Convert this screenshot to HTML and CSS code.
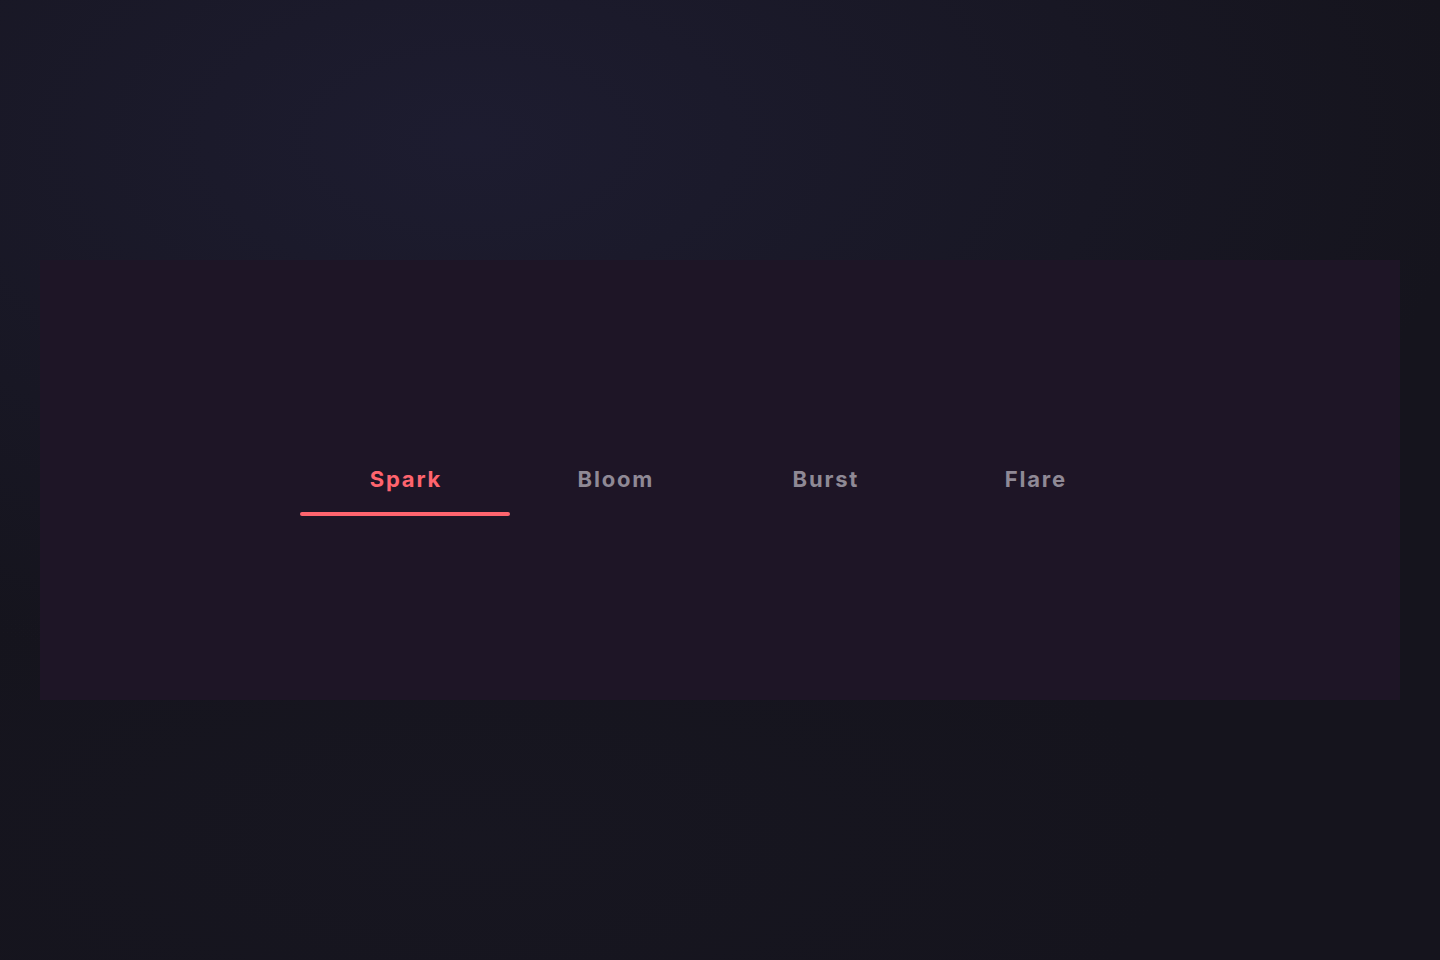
FILE: index.html
```html
<!DOCTYPE html>
<html lang="en">
<head>
<meta charset="utf-8">
<title>Tabs</title>
<link rel="stylesheet" href="styles.css">
</head>
<body>
<main class="stage">
  <section class="panel">
    <nav class="tabs" role="tablist">
      <button class="tab active" role="tab">Spark</button>
      <button class="tab" role="tab">Bloom</button>
      <button class="tab" role="tab">Burst</button>
      <button class="tab" role="tab">Flare</button>
    </nav>
  </section>
</main>
</body>
</html>
```
FILE: styles.css
```css
html, body {
  margin: 0;
  padding: 0;
  height: 100%;
}
body {
  background-color: #15141d;
  background-image:
    radial-gradient(ellipse 1000px 560px at 470px 140px, rgba(30, 29, 50, 0.9), rgba(30, 29, 50, 0) 100%),
    radial-gradient(ellipse 700px 300px at 480px 840px, rgba(25, 24, 36, 0.5), rgba(25, 24, 36, 0) 100%);
  font-family: Inter, "Liberation Sans", sans-serif;
}
.stage {
  box-sizing: border-box;
  height: 960px;
  padding: 260px 40px;
}
.panel {
  height: 440px;
  background: #1e1526;
  display: flex;
  align-items: center;
  padding-left: 260px;
}
.tabs {
  display: flex;
  margin-top: 20px;
}
.tab {
  display: block;
  width: 210px;
  background: none;
  border: 0;
  padding: 0 0 22px;
  font-family: Inter, "Liberation Sans", sans-serif;
  font-size: 22px;
  line-height: 30px;
  font-weight: 700;
  letter-spacing: 1.8px;
  text-indent: 1.8px;
  color: #8f8995;
  position: relative;
  cursor: pointer;
}
.tab.active {
  color: #ff646e;
}
.tab.active::after {
  content: "";
  position: absolute;
  left: 0;
  right: 0;
  bottom: 0;
  height: 4px;
  border-radius: 2px;
  background: #ff646e;
}
```
